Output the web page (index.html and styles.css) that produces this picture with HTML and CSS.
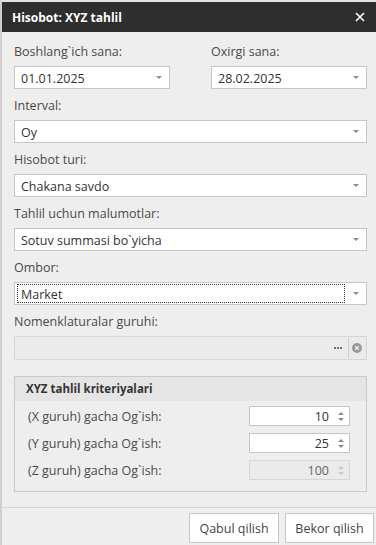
FILE: index.html
```html
<!DOCTYPE html>
<html>
<head>
<meta charset="utf-8">
<link rel="stylesheet" href="styles.css">
</head>
<body>
<div class="dialog">
  <div class="titlebar">
    <span class="title">Hisobot: XYZ tahlil</span>
    <svg class="close" width="10" height="10" viewBox="0 0 10 10"><path d="M1 1L9 9M9 1L1 9" stroke="#fff" stroke-width="1.6"/></svg>
  </div>
  <div class="content">
    <div class="row2">
      <div class="field">
        <div class="label">Boshlang`ich sana:</div>
        <div class="input"><span class="val">01.01.2025</span><span class="arrow"></span></div>
      </div>
      <div class="field">
        <div class="label">Oxirgi sana:</div>
        <div class="input"><span class="val">28.02.2025</span><span class="arrow"></span></div>
      </div>
    </div>
    <div class="label">Interval:</div>
    <div class="input"><span class="val">Oy</span><span class="arrow"></span></div>
    <div class="label">Hisobot turi:</div>
    <div class="input"><span class="val">Chakana savdo</span><span class="arrow"></span></div>
    <div class="label">Tahlil uchun malumotlar:</div>
    <div class="input"><span class="val">Sotuv summasi bo`yicha</span><span class="arrow"></span></div>
    <div class="label">Ombor:</div>
    <div class="input"><span class="val focus">Market</span><span class="arrow"></span></div>
    <div class="label">Nomenklaturalar guruhi:</div>
    <div class="input disabled nom">
      <span class="val"></span>
      <svg class="dots" width="8" height="2" viewBox="0 0 8 2"><rect x="0" y="0" width="2" height="2" fill="#6f6f6f"/><rect x="3" y="0" width="2" height="2" fill="#6f6f6f"/><rect x="6" y="0" width="2" height="2" fill="#6f6f6f"/></svg>
      <span class="sep"></span>
      <svg class="clear" width="10" height="10" viewBox="0 0 10 10"><circle cx="5" cy="5" r="5" fill="#9a9a9a"/><path d="M3.2 3.2L6.8 6.8M6.8 3.2L3.2 6.8" stroke="#eee" stroke-width="1.3"/></svg>
    </div>
    <div class="group">
      <div class="ghead">XYZ tahlil kriteriyalari</div>
      <div class="gbody">
        <div class="grow">
          <span class="glabel">(X guruh) gacha Og`ish:</span>
          <div class="spin"><span class="num">10</span><span class="spinbtn"><span class="up"></span><span class="down"></span></span></div>
        </div>
        <div class="grow">
          <span class="glabel">(Y guruh) gacha Og`ish:</span>
          <div class="spin"><span class="num">25</span><span class="spinbtn"><span class="up"></span><span class="down"></span></span></div>
        </div>
        <div class="grow">
          <span class="glabel">(Z guruh) gacha Og`ish:</span>
          <div class="spin disabled"><span class="num">100</span><span class="spinbtn"><span class="up"></span><span class="down"></span></span></div>
        </div>
      </div>
    </div>
  </div>
  <div class="footer">
    <button class="btn">Qabul qilish</button>
    <button class="btn">Bekor qilish</button>
  </div>
</div>
</body>
</html>
```
FILE: styles.css
```css
html, body {
  margin: 0;
  padding: 0;
  background: #eeeeee;
}
body {
  font-family: "Open Sans", "Noto Sans", sans-serif;
  font-size: 12px;
  color: #444;
}
.dialog {
  width: 376px;
  height: 545px;
  box-sizing: border-box;
  border-top: 2px solid #e2e2e2;
  border-left: 2px solid #cfcfcf;
  display: flex;
  flex-direction: column;
  background: #eeeeee;
}
.titlebar {
  height: 30px;
  background: #2e2e2e;
  display: flex;
  align-items: center;
  justify-content: space-between;
  padding: 0 11px 0 10px;
  flex-shrink: 0;
}
.title {
  color: #fff;
  font-weight: 700;
  font-size: 12px;
}
.content {
  padding: 11px 9px 0 12px;
  display: flex;
  flex-direction: column;
  flex: 1;
}
.row2 {
  display: flex;
  justify-content: space-between;
}
.row2 .field {
  width: 156px;
  display: flex;
  flex-direction: column;
}
.label {
  height: 18px;
  line-height: 18px;
  margin-bottom: 5px;
  font-size: 12.5px;
  color: #4a4a4a;
}
.input {
  height: 23px;
  box-sizing: border-box;
  border: 1px solid #c6c6c6;
  background: #fff;
  display: flex;
  align-items: center;
  padding: 0 7px 0 2px;
  margin-bottom: 8px;
  font-size: 12.5px;
  color: #333;
}
.val {
  flex: 1;
  padding-left: 3px;
  height: 19px;
  line-height: 19px;
  box-sizing: border-box;
  border: 1px solid transparent;
}
.val.focus {
  border: 1px dotted #333;
  margin-right: 8px;
}
.arrow {
  width: 0;
  height: 0;
  border-left: 3px solid transparent;
  border-right: 3px solid transparent;
  border-top: 3px solid #8c8c8c;
}
.input.disabled {
  background: #ebebeb;
  border-color: #d6d6d6;
  height: 24px;
}
.nom { padding-right: 4px; margin-bottom: 16px; }
.dots {
  margin-right: 6px;
}
.sep {
  width: 1px;
  height: 20px;
  background: #cfcfcf;
  margin-right: 3px;
}
.group {
  border: 1px solid #c9c9c9;
  height: 116px;
  box-sizing: border-box;
}
.ghead {
  height: 24px;
  line-height: 24px;
  background: #e5e5e5;
  padding-left: 11px;
  font-weight: 700;
  font-size: 11.5px;
  color: #333;
}
.gbody {
  padding: 5px 16px 0 13px;
  display: flex;
  flex-direction: column;
  gap: 7px;
}
.grow {
  display: flex;
  align-items: center;
  justify-content: space-between;
  height: 20px;
}
.glabel {
  font-size: 12.5px;
  color: #4a4a4a;
}
.spin {
  width: 101px;
  height: 20px;
  box-sizing: border-box;
  border: 1px solid #c6c6c6;
  background: #fff;
  display: flex;
  align-items: center;
  justify-content: flex-end;
  font-size: 12.5px;
  color: #333;
  padding-right: 5px;
}
.num { margin-right: 9px; }
.spinbtn {
  display: flex;
  flex-direction: column;
  gap: 3px;
}
.up {
  width: 0; height: 0;
  border-left: 3px solid transparent;
  border-right: 3px solid transparent;
  border-bottom: 3px solid #8a8a8a;
}
.down {
  width: 0; height: 0;
  border-left: 3px solid transparent;
  border-right: 3px solid transparent;
  border-top: 3px solid #8a8a8a;
}
.spin.disabled {
  background: #ebebeb;
  border-color: #d6d6d6;
  color: #666;
}
.spin.disabled .up { border-bottom-color: #c8c8c8; }
.spin.disabled .down { border-top-color: #c8c8c8; }
.footer {
  height: 38px;
  border-top: 1px solid #d6d6d6;
  display: flex;
  justify-content: flex-end;
  align-items: flex-start;
  padding: 5px 2px 0 0;
  gap: 6px;
  flex-shrink: 0;
  box-sizing: border-box;
}
.btn {
  height: 30px;
  border: 1px solid #c6c6c6;
  background: #fff;
  font-family: "Open Sans", "Noto Sans", sans-serif;
  font-size: 12.5px;
  color: #444;
  padding: 0 9px;
  margin: 0;
}
.btn:first-child { width: 90px; }
.btn:last-child { width: 89px; }
```
